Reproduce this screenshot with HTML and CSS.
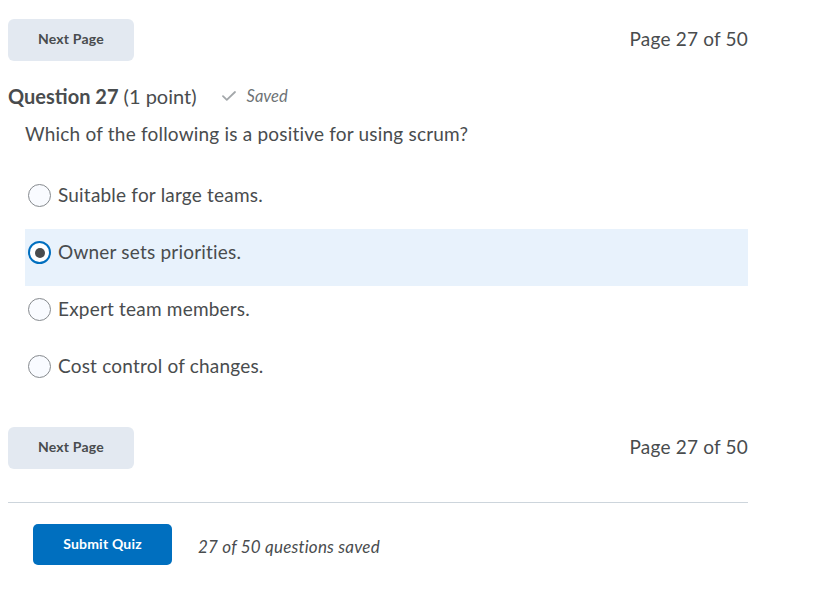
FILE: index.html
```html
<!DOCTYPE html>
<html>
<head>
<meta charset="utf-8">
<link rel="stylesheet" href="styles.css">
</head>
<body>
<div class="page">
  <div class="nav-row top">
    <button class="btn-secondary">Next Page</button>
    <span class="page-count">Page 27 of 50</span>
  </div>

  <div class="q-header">
    <span class="q-title"><strong>Question 27</strong> (1 point)</span>
    <span class="saved">
      <svg class="check" width="14" height="10" viewBox="0 0 14 10"><path d="M1 5.2 L4.8 8.8 L13 1" fill="none" stroke="#a3a7aa" stroke-width="1.8" stroke-linecap="round" stroke-linejoin="round"/></svg>
      <em>Saved</em>
    </span>
  </div>

  <div class="q-text">Which of the following is a positive for using scrum?</div>

  <div class="options">
    <label class="option"><span class="radio"></span><span>Suitable for large teams.</span></label>
    <label class="option selected"><span class="radio checked"></span><span>Owner sets priorities.</span></label>
    <label class="option"><span class="radio"></span><span>Expert team members.</span></label>
    <label class="option"><span class="radio"></span><span>Cost control of changes.</span></label>
  </div>

  <div class="nav-row bottom">
    <button class="btn-secondary">Next Page</button>
    <span class="page-count">Page 27 of 50</span>
  </div>

  <hr class="sep">

  <div class="submit-row">
    <button class="btn-primary">Submit Quiz</button>
    <em class="saved-count">27 of 50 questions saved</em>
  </div>
</div>
</body>
</html>
```

FILE: styles.css
```css
* { box-sizing: border-box; }
html, body { margin: 0; padding: 0; background: #fff; }
body {
  font-family: Lato, "Open Sans", sans-serif;
  color: #494c4e;
  letter-spacing: 0.2px;
}
.page {
  width: 748px;
  padding: 19px 0 0 8px;
}
.nav-row {
  display: flex;
  justify-content: space-between;
  align-items: center;
}
.btn-secondary {
  width: 126px;
  height: 42px;
  border: none;
  border-radius: 6px;
  background: #e3e9f1;
  color: #494c4e;
  font-family: Lato, sans-serif;
  font-weight: 700;
  font-size: 14px;
  letter-spacing: 0.2px;
  padding: 0 0 3px 0;
}
.page-count {
  font-size: 19px;
  color: #494c4e;
  margin-bottom: 3px;
}
.q-header {
  display: flex;
  align-items: center;
  margin-top: 23px;
  height: 24px;
}
.q-title {
  font-size: 20px;
  letter-spacing: 0;
}
.q-title strong { font-weight: 700; }
.saved {
  display: flex;
  align-items: center;
  margin-left: 25px;
  color: #6e7376;
  font-size: 16.5px;
  letter-spacing: 0;
}
.check { margin-right: 11px; margin-top: -1px; }
.q-text {
  font-size: 19px;
  margin: 14px 0 0 17px;
  line-height: 24px;
}
.options {
  margin: 26px 0 0 17px;
}
.option {
  display: flex;
  align-items: center;
  height: 57px;
  padding: 0 0 12px 3px;
  font-size: 19px;
  line-height: 24px;
}
.option.selected { background: #e8f2fc; }
.radio {
  width: 23px;
  height: 23px;
  border: 1px solid #868a8e;
  border-radius: 50%;
  background: #f9fbff;
  margin: 2px 7px 0 0;
  flex: none;
  position: relative;
}
.radio.checked {
  border: 2px solid #006fbf;
  background: #fff;
}
.radio.checked::after {
  content: "";
  position: absolute;
  left: 50%;
  top: 50%;
  width: 10px;
  height: 10px;
  margin: -5px 0 0 -5px;
  border-radius: 50%;
  background: #494c4e;
}
.nav-row.bottom { margin-top: 27px; }
.sep {
  border: none;
  border-top: 1px solid #cdd5dc;
  margin: 33px 0 0 0;
}
.submit-row {
  display: flex;
  align-items: center;
  margin: 21px 0 0 25px;
}
.btn-primary {
  width: 139px;
  height: 41px;
  border: none;
  border-radius: 5px;
  background: #006fbf;
  color: #fff;
  font-family: Lato, sans-serif;
  font-weight: 700;
  font-size: 14px;
  letter-spacing: 0.2px;
  padding: 0 0 2px 0;
}
.saved-count {
  margin-left: 26px;
  font-size: 17px;
  color: #494c4e;
  margin-top: 4px;
}
```
